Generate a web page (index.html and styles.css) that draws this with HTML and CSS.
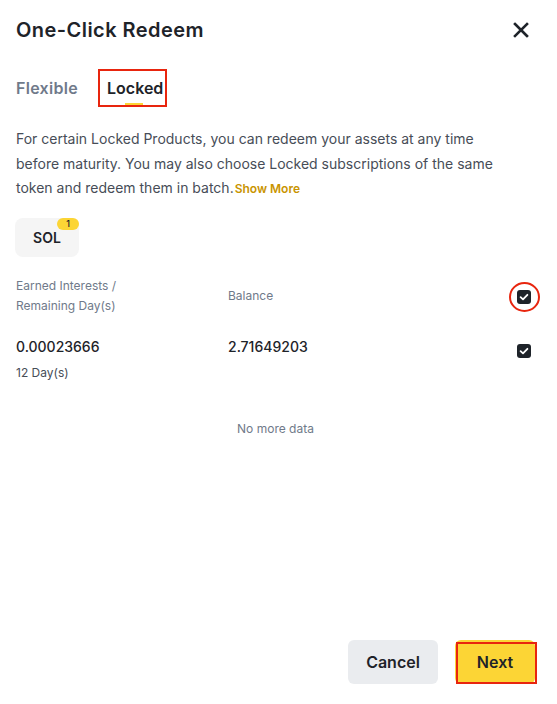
FILE: index.html
```html
<!DOCTYPE html>
<html>
<head>
<meta charset="utf-8">
<link rel="stylesheet" href="styles.css">
</head>
<body>
<div class="modal">
  <div class="header">
    <div class="title">One-Click Redeem</div>
    <svg class="close" width="16" height="16" viewBox="0 0 16 16"><path d="M2 2L14 14M14 2L2 14" stroke="#1E2329" stroke-width="2.6" stroke-linecap="square"/></svg>
  </div>
  <div class="tabs">
    <div class="tab">Flexible</div>
    <div class="tab active">Locked<span class="bar"></span></div>
  </div>
  <p class="desc">For certain Locked Products, you can redeem your assets at any time before maturity. You may also choose Locked subscriptions of the same token and redeem them in batch.<span class="more">Show More</span></p>
  <div class="chips">
    <div class="chip">SOL<span class="badge">1</span></div>
  </div>
  <div class="thead">
    <div class="c1">Earned Interests /<br>Remaining Day(s)</div>
    <div class="c2">Balance</div>
    <div class="c3"><span class="ring"></span><span class="check"><svg width="14" height="14" viewBox="0 0 14 14"><path d="M3.6 7.2L6 9.4L10.4 4.8" fill="none" stroke="#fff" stroke-width="1.8" stroke-linecap="round" stroke-linejoin="round"/></svg></span></div>
  </div>
  <div class="trow">
    <div class="c1"><div class="num">0.00023666</div><div class="sub">12 Day(s)</div></div>
    <div class="c2"><div class="num">2.71649203</div></div>
    <div class="c3"><span class="check"><svg width="14" height="14" viewBox="0 0 14 14"><path d="M3.6 7.2L6 9.4L10.4 4.8" fill="none" stroke="#fff" stroke-width="1.8" stroke-linecap="round" stroke-linejoin="round"/></svg></span></div>
  </div>
  <div class="nomore">No more data</div>
  <div class="footer">
    <button class="btn cancel">Cancel</button>
    <button class="btn next">Next</button>
  </div>
</div>
</body>
</html>
```

FILE: styles.css
```css
* { box-sizing: border-box; }
html, body { margin: 0; padding: 0; background: #fff; }
body { font-family: Inter, "Noto Sans", "Liberation Sans", sans-serif; color: #1E2329; }
.modal { height: 704px; display: flex; flex-direction: column; padding: 16px 22px 20px 16px; }
.header { display: flex; justify-content: space-between; align-items: center; height: 28px; }
.title { font-size: 20px; font-weight: 600; line-height: 28px; letter-spacing: 0.45px; }
.close { margin-right: 6px; }
.tabs { display: flex; align-items: center; margin-top: 25px; gap: 20px; height: 38px; }
.tab { font-size: 16px; font-weight: 600; line-height: 24px; color: #707A8A; letter-spacing: 0.3px; }
.tab.active { position: relative; color: #1E2329; border: 2px solid #E8250E; width: 69px; height: 38px; padding: 5px 0 0 7px; letter-spacing: 0; }
.tab .bar { position: absolute; left: 25px; bottom: 0; width: 18px; height: 2px; background: #FCD535; }
.desc { margin: 20px 0 0; width: 500px; font-size: 14px; line-height: 24.5px; color: #474D57; }
.more { color: #C99400; font-size: 12px; font-weight: 600; margin-left: 1px; }
.chips { display: flex; margin-top: 16px; }
.chip { position: relative; width: 64px; height: 39px; margin-left: -1px; background: #F5F5F5; border-radius: 8px; display: flex; align-items: center; justify-content: center; font-size: 14px; font-weight: 600; }
.badge { position: absolute; top: 0; right: 0; width: 22px; height: 12px; border-radius: 6px; background: #FCD535; font-size: 9px; line-height: 12px; text-align: center; font-weight: 500; }
.thead, .trow { display: flex; }
.thead { margin-top: 19px; align-items: center; font-size: 12px; line-height: 20px; color: #707A8A; }
.c1 { width: 212px; }
.c2 { flex: 1; }
.c3 { position: relative; width: 14px; height: 14px; margin-right: 4px; }
.thead .c3 { margin-top: 2px; }
.check { display: block; width: 14px; height: 14px; border-radius: 3px; background: #1E2329; }
.check svg { display: block; }
.ring { position: absolute; left: -8px; top: -8px; width: 31px; height: 30px; border: 2px solid #E8250E; border-radius: 50%; }
.trow { margin-top: 18px; }
.trow .c3 { margin-top: 10px; }
.num { font-size: 14px; font-weight: 500; line-height: 26px; }
.sub { font-size: 12px; line-height: 26px; color: #474D57; }
.nomore { margin-top: 33px; text-align: center; font-size: 12px; line-height: 20px; color: #707A8A; }
.footer { margin-top: auto; display: flex; justify-content: flex-end; gap: 17px; }
.btn { font-family: inherit; border: none; border-radius: 6px; height: 44px; font-size: 16px; font-weight: 600; color: #1E2329; padding: 0; }
.cancel { width: 90px; background: #EAECEF; }
.next { position: relative; width: 80px; background: #FCD535; }
.next::after { content: ""; position: absolute; left: 1px; top: 2px; right: -2px; bottom: 0; border: 2px solid #E8250E; }
```
